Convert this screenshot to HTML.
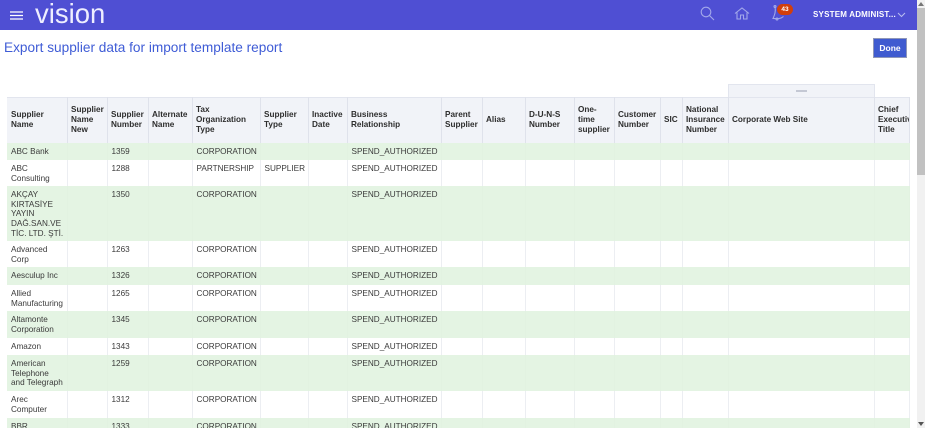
<!DOCTYPE html>
<html><head><meta charset="utf-8">
<style>
html,body{margin:0;padding:0;width:925px;height:428px;overflow:hidden;background:#fff;font-family:"Liberation Sans","Noto Sans CJK SC",sans-serif}
.abs{position:absolute}
#nav{left:0;top:0;width:917px;height:30px;background:#4f4fd3}
#logo{left:35px;top:-4px;color:#eeeeff;font-size:27.500px;line-height:36px;white-space:nowrap}
#user{left:813px;top:10px;color:#fff;font-weight:bold;font-size:8px;line-height:10px;letter-spacing:.2px;white-space:nowrap}
#badge{left:777px;top:4px;width:16px;height:11px;border-radius:6px;background:#d23f0c;color:#fff;font-size:6.5px;font-weight:bold;line-height:11px;text-align:center}
#title{left:4px;top:39px;color:#3f5cd6;font-size:13.65px;line-height:18px;white-space:nowrap}
#done{left:873px;top:38px;width:32px;height:18px;background:#3f5bd0;border:1px solid #8f97b8;color:#fff;font-weight:bold;font-size:8.5px;line-height:18px;text-align:center}
#tab{left:728px;top:84px;width:145px;height:12px;background:#f1f3f8;border:1px solid #e2e5ee;border-bottom:none}
#tab i{position:absolute;left:67px;top:5px;width:11px;height:2px;background:#c4c8d4;display:block}
#wrap{left:7px;top:97px;width:903px;height:331px;overflow:hidden}
table{border-collapse:separate;border-spacing:0;table-layout:fixed;width:903px;font-size:8.2px;line-height:9.7px;color:#3a3a3a}
th,td{padding:4px 0 0 4px;box-sizing:border-box;vertical-align:top;text-align:left;border-right:1px solid #eceef2;overflow:hidden}
td:nth-child(n+2){padding-left:3.5px}
th{background:#f1f3f8;color:#2e2e2e;font-weight:bold;vertical-align:middle;padding:0 0 0 4px;height:46px;border-right:1px solid #dfe2eb;box-shadow:inset 0 1px 0 #e2e5ee;white-space:normal}
th:nth-child(n+2){padding-left:3px}
tr.g td{background:#e4f4e3;border-right-color:#e2f2e1}
#sb{left:917px;top:0;width:8px;height:428px;background:#f1f1f1}
#thumb{left:917px;top:8px;width:8px;height:167px;background:#c1c1c1}
</style></head>
<body>
<div class="abs" id="nav"></div>
<svg class="abs" style="left:10px;top:11px" width="13" height="9"><path d="M0 1h13M0 4.500h13M0 8h13" stroke="#fff" stroke-width="1.3"/></svg>
<div class="abs" id="logo">vision</div>
<svg class="abs" style="left:699px;top:5px" width="17" height="17" fill="none" stroke="#a3a8ea" stroke-width="1.1"><circle cx="7" cy="7" r="4.800"/><path d="M10.500 10.500l4.500 4.500"/></svg>
<svg class="abs" style="left:734px;top:7px" width="16" height="13" fill="none" stroke="#a3a8ea" stroke-width="1.1"><path d="M1 6.500L8 1l7 5.500M3 5.500V12h3.500V8h3v4H13V5.500"/></svg>
<svg class="abs" style="left:771px;top:4px" width="16" height="17" fill="none" stroke="#a3a8ea" stroke-width="1.1"><path d="M4 2.500C5 8 3.500 11 2 14.500C5 14.500 9 15.500 12.500 12.500"/><circle cx="4" cy="2.500" r="1"/><circle cx="6" cy="15" r="1"/></svg>
<div class="abs" id="badge">43</div>
<div class="abs" id="user">SYSTEM ADMINIST...</div>
<svg class="abs" style="left:897px;top:12px" width="9" height="6" fill="none" stroke="#b9bdf0" stroke-width="1"><path d="M1 1l3.500 3.500L8 1"/></svg>
<div class="abs" id="title">Export supplier data for import template report</div>
<div class="abs" id="done">Done</div>
<div class="abs" id="tab"><i></i></div>
<div class="abs" id="wrap">
<table>
<colgroup><col style="width:61px"><col style="width:40px"><col style="width:41px"><col style="width:44px"><col style="width:68px"><col style="width:48px"><col style="width:39px"><col style="width:94px"><col style="width:41px"><col style="width:43px"><col style="width:49px"><col style="width:40px"><col style="width:46px"><col style="width:22px"><col style="width:46px"><col style="width:146px"><col style="width:35px"></colgroup>
<tr style="height:46px"><th>Supplier<br>Name</th><th>Supplier<br>Name<br>New</th><th>Supplier<br>Number</th><th>Alternate<br>Name</th><th>Tax<br>Organization<br>Type</th><th>Supplier<br>Type</th><th>Inactive<br>Date</th><th>Business<br>Relationship</th><th>Parent<br>Supplier</th><th>Alias</th><th>D-U-N-S<br>Number</th><th>One-<br>time<br>supplier</th><th>Customer<br>Number</th><th>SIC</th><th>National<br>Insurance<br>Number</th><th>Corporate Web Site</th><th style="white-space:nowrap">Chief<br>Executive<br>Title</th></tr>
<tr class="g" style="height:17px"><td>ABC Bank</td><td></td><td>1359</td><td></td><td>CORPORATION</td><td></td><td></td><td>SPEND_AUTHORIZED</td><td></td><td></td><td></td><td></td><td></td><td></td><td></td><td></td><td></td></tr>
<tr style="height:26px"><td>ABC<br>Consulting</td><td></td><td>1288</td><td></td><td>PARTNERSHIP</td><td>SUPPLIER</td><td></td><td>SPEND_AUTHORIZED</td><td></td><td></td><td></td><td></td><td></td><td></td><td></td><td></td><td></td></tr>
<tr class="g" style="height:55px"><td>AKÇAY<br>KIRTASİYE<br>YAYIN<br>DAĞ.SAN.VE<br>TİC. LTD. ŞTİ.</td><td></td><td>1350</td><td></td><td>CORPORATION</td><td></td><td></td><td>SPEND_AUTHORIZED</td><td></td><td></td><td></td><td></td><td></td><td></td><td></td><td></td><td></td></tr>
<tr style="height:26px"><td>Advanced<br>Corp</td><td></td><td>1263</td><td></td><td>CORPORATION</td><td></td><td></td><td>SPEND_AUTHORIZED</td><td></td><td></td><td></td><td></td><td></td><td></td><td></td><td></td><td></td></tr>
<tr class="g" style="height:18px"><td>Aesculup Inc</td><td></td><td>1326</td><td></td><td>CORPORATION</td><td></td><td></td><td>SPEND_AUTHORIZED</td><td></td><td></td><td></td><td></td><td></td><td></td><td></td><td></td><td></td></tr>
<tr style="height:26px"><td>Allied<br>Manufacturing</td><td></td><td>1265</td><td></td><td>CORPORATION</td><td></td><td></td><td>SPEND_AUTHORIZED</td><td></td><td></td><td></td><td></td><td></td><td></td><td></td><td></td><td></td></tr>
<tr class="g" style="height:27px"><td>Altamonte<br>Corporation</td><td></td><td>1345</td><td></td><td>CORPORATION</td><td></td><td></td><td>SPEND_AUTHORIZED</td><td></td><td></td><td></td><td></td><td></td><td></td><td></td><td></td><td></td></tr>
<tr style="height:17px"><td>Amazon</td><td></td><td>1343</td><td></td><td>CORPORATION</td><td></td><td></td><td>SPEND_AUTHORIZED</td><td></td><td></td><td></td><td></td><td></td><td></td><td></td><td></td><td></td></tr>
<tr class="g" style="height:36px"><td>American<br>Telephone<br>and Telegraph</td><td></td><td>1259</td><td></td><td>CORPORATION</td><td></td><td></td><td>SPEND_AUTHORIZED</td><td></td><td></td><td></td><td></td><td></td><td></td><td></td><td></td><td></td></tr>
<tr style="height:27px"><td>Arec<br>Computer</td><td></td><td>1312</td><td></td><td>CORPORATION</td><td></td><td></td><td>SPEND_AUTHORIZED</td><td></td><td></td><td></td><td></td><td></td><td></td><td></td><td></td><td></td></tr>
<tr class="g" style="height:26px"><td>BBR</td><td></td><td>1333</td><td></td><td>CORPORATION</td><td></td><td></td><td>SPEND_AUTHORIZED</td><td></td><td></td><td></td><td></td><td></td><td></td><td></td><td></td><td></td></tr>
</table>
</div>
<div class="abs" id="sb"></div>
<div class="abs" id="thumb"></div>
<svg class="abs" style="left:918px;top:2px" width="6" height="4"><path d="M3 0l3 4H0z" fill="#777"/></svg>
<svg class="abs" style="left:918px;top:422px" width="6" height="4"><path d="M0 0h6L3 4z" fill="#555"/></svg>
</body></html>
